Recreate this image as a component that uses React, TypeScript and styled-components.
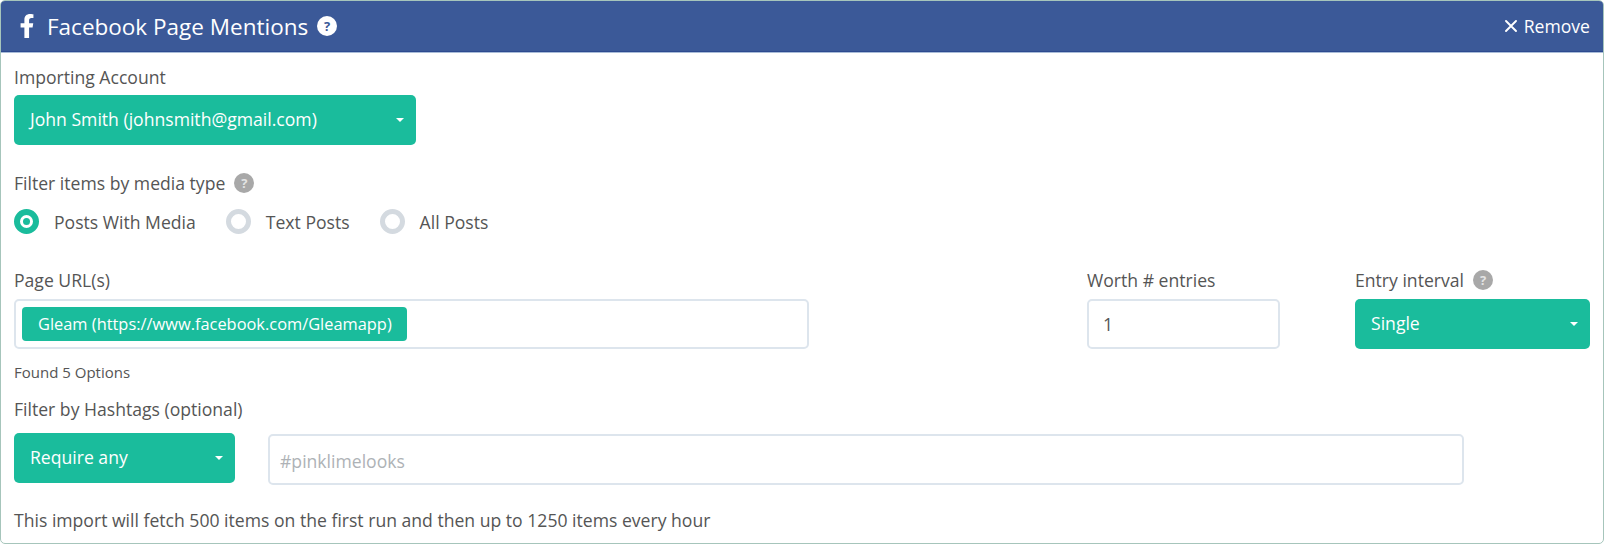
import React from "react";
import styled, { createGlobalStyle } from "styled-components";
import { FaFacebookF } from "react-icons/fa";

const GlobalStyle = createGlobalStyle`
  html, body {
    margin: 0;
    padding: 0;
    background: #fff;
  }
  * {
    box-sizing: border-box;
  }
`;

const Card = styled.div`
  width: 1604px;
  height: 544px;
  border: 1px solid #a6c5bb;
  border-radius: 5px;
  overflow: hidden;
  font-family: "Open Sans", sans-serif;
  font-size: 17.6px;
  color: #555;
  background: #fff;
`;

const Header = styled.div`
  height: 51px;
  display: flex;
  align-items: center;
  background: #3b5998;
  border-bottom: 1px solid #2d4a8f;
  box-shadow: 0 1px 0 #a9bcd8;
  color: #fff;
  padding: 0 13px 0 14px;
`;

const Title = styled.span`
  font-size: 22.5px;
  margin-left: 8px;
  margin-right: 9px;
`;

const HelpDot = styled.span<{ $light?: boolean }>`
  width: 20px;
  height: 20px;
  flex: none;
  border-radius: 50%;
  display: flex;
  align-items: center;
  justify-content: center;
  font-size: 13px;
  font-weight: 700;
  line-height: 1;
  background: ${(p) => (p.$light ? "#fff" : "#a8a8a8")};
  color: ${(p) => (p.$light ? "#3b5998" : "#e4e4e4")};
`;

const Remove = styled.span`
  margin-left: auto;
  display: flex;
  align-items: center;
  gap: 7px;
`;

const Body = styled.div`
  padding: 14px 13px 0 13px;
`;

const Label = styled.div<{ $top?: number; $bottom?: number }>`
  display: flex;
  align-items: center;
  gap: 9px;
  height: 22px;
  line-height: 22px;
  margin-top: ${(p) => p.$top ?? 0}px;
  margin-bottom: ${(p) => p.$bottom ?? 8}px;
`;

const Dropdown = styled.div<{ $width: number }>`
  width: ${(p) => p.$width}px;
  height: 50px;
  flex: none;
  display: flex;
  align-items: center;
  justify-content: space-between;
  padding: 0 12px 2px 16px;
  background: #1abc9c;
  border-radius: 5px;
  color: #fff;
`;

const Caret = styled.span`
  width: 0;
  height: 0;
  margin-top: 2px;
  border-left: 4.5px solid transparent;
  border-right: 4.5px solid transparent;
  border-top: 4.5px solid #fff;
`;

const RadioRow = styled.div`
  display: flex;
  align-items: center;
  height: 25px;
  margin-top: 15px;
`;

const Radio = styled.span<{ $checked?: boolean }>`
  width: 25px;
  height: 25px;
  flex: none;
  border-radius: 50%;
  border: ${(p) => (p.$checked ? "6px solid #1abc9c" : "5px solid #d4dae0")};
  background: #fff;
  display: flex;
  align-items: center;
  justify-content: center;

  &::after {
    content: "";
    width: 7px;
    height: 7px;
    border-radius: 50%;
    background: ${(p) => (p.$checked ? "#1abc9c" : "transparent")};
  }
`;

const RadioLabel = styled.span`
  margin-left: 15px;
  margin-right: 30px;
`;

const FieldRow = styled.div`
  display: flex;
  margin-top: 35px;
`;

const Field = styled.div<{ $width: number; $left?: number }>`
  width: ${(p) => p.$width}px;
  margin-left: ${(p) => p.$left ?? 0}px;
`;

const InputBox = styled.div<{ $height?: number }>`
  height: ${(p) => p.$height ?? 50}px;
  border: 2px solid #dde5ed;
  border-radius: 5px;
  background: #fff;
  display: flex;
  align-items: center;
`;

const Tag = styled.span`
  height: 34px;
  margin-left: 6px;
  padding: 0 15px 2px 16px;
  display: flex;
  align-items: center;
  background: #1abc9c;
  border-radius: 4px;
  color: #fff;
  font-size: 16.4px;
`;

const NumberValue = styled.span`
  margin-left: 14px;
  color: #555;
`;

const Found = styled.div`
  height: 20px;
  line-height: 20px;
  margin-top: 13px;
  font-size: 15px;
`;

const HashtagRow = styled.div`
  display: flex;
  align-items: flex-start;
`;

const HashtagInput = styled(InputBox)`
  width: 1196px;
  margin-top: 1px;
  margin-left: 33px;
`;

const Placeholder = styled.span`
  margin-left: 10px;
  margin-top: 3px;
  color: #aeb2b6;
`;

const Note = styled.div`
  height: 22px;
  line-height: 22px;
  margin-top: 24px;
`;

const RemoveIcon = () => (
  <svg width="12" height="12" viewBox="0 0 12 12" fill="none">
    <path
      d="M1 1 11 11M11 1 1 11"
      stroke="#fff"
      strokeWidth="1.9"
      strokeLinecap="round"
    />
  </svg>
);

export default function App() {
  return (
    <>
      <GlobalStyle />
      <Card>
        <Header>
          <FaFacebookF size={24} />
          <Title>Facebook Page Mentions</Title>
          <HelpDot $light>?</HelpDot>
          <Remove>
            <RemoveIcon />
            Remove
          </Remove>
        </Header>
        <Body>
          <Label $bottom={7}>Importing Account</Label>
          <Dropdown $width={402}>
            John Smith (johnsmith@gmail.com)
            <Caret />
          </Dropdown>

          <Label $top={27}>
            Filter items by media type
            <HelpDot>?</HelpDot>
          </Label>
          <RadioRow>
            <Radio $checked />
            <RadioLabel>Posts With Media</RadioLabel>
            <Radio />
            <RadioLabel>Text Posts</RadioLabel>
            <Radio />
            <RadioLabel>All Posts</RadioLabel>
          </RadioRow>

          <FieldRow>
            <Field $width={795}>
              <Label>Page URL(s)</Label>
              <InputBox>
                <Tag>Gleam (https://www.facebook.com/Gleamapp)</Tag>
              </InputBox>
            </Field>
            <Field $width={193} $left={278}>
              <Label>Worth # entries</Label>
              <InputBox>
                <NumberValue>1</NumberValue>
              </InputBox>
            </Field>
            <Field $width={235} $left={75}>
              <Label>
                Entry interval
                <HelpDot>?</HelpDot>
              </Label>
              <Dropdown $width={235}>
                Single
                <Caret />
              </Dropdown>
            </Field>
          </FieldRow>

          <Found>Found 5 Options</Found>

          <Label $top={16} $bottom={13}>
            Filter by Hashtags (optional)
          </Label>
          <HashtagRow>
            <Dropdown $width={221}>
              Require any
              <Caret />
            </Dropdown>
            <HashtagInput $height={51}>
              <Placeholder>#pinklimelooks</Placeholder>
            </HashtagInput>
          </HashtagRow>

          <Note>
            This import will fetch 500 items on the first run and then up to
            1250 items every hour
          </Note>
        </Body>
      </Card>
    </>
  );
}
